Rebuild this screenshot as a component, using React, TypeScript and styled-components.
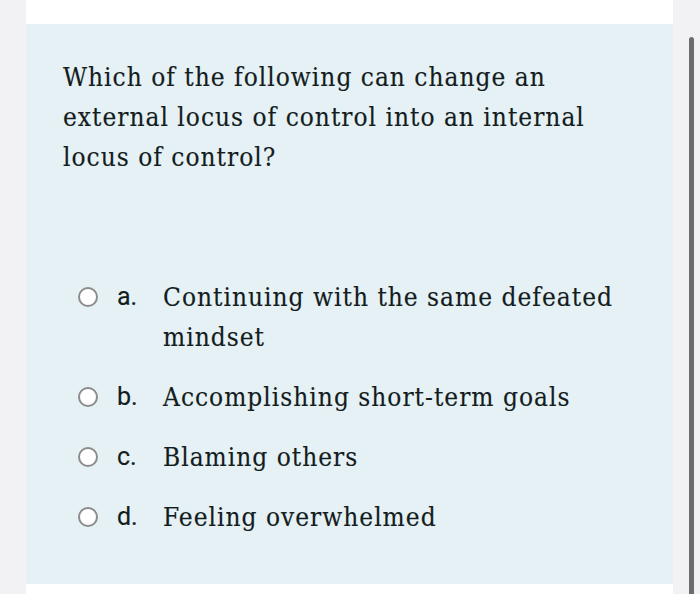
import React from "react";
import styled, { createGlobalStyle } from "styled-components";

const GlobalStyle = createGlobalStyle`
    html, body {
        margin: 0;
        padding: 0;
        background: #f2f2f4;
    }
`;

const options = [
    { letter: "a.", text: "Continuing with the same defeated mindset" },
    { letter: "b.", text: "Accomplishing short-term goals" },
    { letter: "c.", text: "Blaming others" },
    { letter: "d.", text: "Feeling overwhelmed" },
];

export default function App() {
    return (
        <>
            <GlobalStyle />
            <Page>
                <Card>
                    <Panel>
                        <Question>
                            Which of the following can change an external locus of control into an internal locus of
                            control?
                        </Question>
                        <Options>
                            {options.map((o) => (
                                <Option key={o.letter}>
                                    <Radio type="radio" name="answer" />
                                    <Letter>{o.letter}</Letter>
                                    <Answer>{o.text}</Answer>
                                </Option>
                            ))}
                        </Options>
                    </Panel>
                </Card>
                <Track>
                    <Thumb />
                </Track>
            </Page>
        </>
    );
}

const Page = styled.div`
    display: flex;
    height: 594px;
    width: 700px;
    overflow: hidden;
    background: #f2f2f4;
`;

const Card = styled.div`
    margin-left: 26px;
    width: 647px;
    background: #ffffff;
    padding: 24px 0 10px;
    box-sizing: border-box;
`;

const Panel = styled.div`
    background: #e5f1f4;
    padding: 33px 36px 49px 37px;
    height: 560px;
    box-sizing: border-box;
    color: #141c1e;
`;

const serif = `"DejaVu Serif Condensed", "DejaVu Serif", "Liberation Serif", serif`;

const Question = styled.div`
    font-family: ${serif};
    font-stretch: condensed;
    font-size: 26px;
    letter-spacing: 1px;
    line-height: 40px;
    width: 540px;
    -webkit-text-stroke: 0.15px #141c1e;
`;

const Options = styled.div`
    display: flex;
    flex-direction: column;
    gap: 20px;
    margin-top: 100px;
    padding-left: 15px;
`;

const Option = styled.label`
    display: grid;
    grid-template-columns: 20px 27px 1fr;
    column-gap: 19px;
    align-items: start;
`;

const Radio = styled.input`
    appearance: none;
    margin: 10px 0 0;
    width: 20px;
    height: 20px;
    border-radius: 50%;
    border: 2px solid #8c8c8c;
    background: #ffffff;
    box-sizing: border-box;
`;

const Letter = styled.span`
    font-family: Roboto, "Liberation Sans", sans-serif;
    font-size: 25px;
    line-height: 40px;
    -webkit-text-stroke: 0.15px #141c1e;
`;

const Answer = styled.span`
    font-family: ${serif};
    font-stretch: condensed;
    font-size: 26px;
    letter-spacing: 1px;
    line-height: 40px;
    width: 455px;
    -webkit-text-stroke: 0.15px #141c1e;
`;

const Track = styled.div`
    display: flex;
    padding-left: 16px;
    padding-top: 37px;
`;

const Thumb = styled.div`
    width: 5px;
    height: 600px;
    background: #6c6c6c;
    border-radius: 3px 3px 0 0;
`;
